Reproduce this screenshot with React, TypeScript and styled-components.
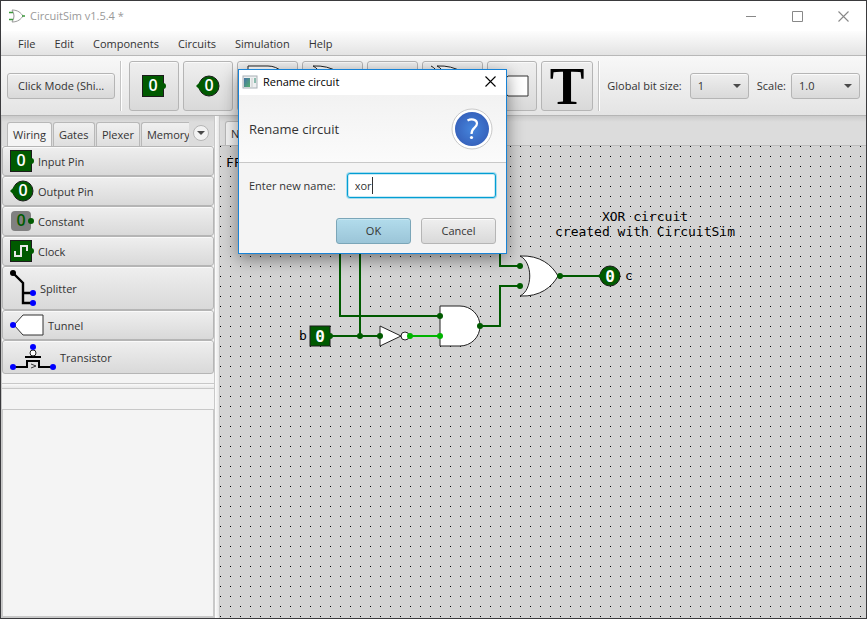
import React from 'react';
import styled, { createGlobalStyle, css } from 'styled-components';

const GREEN = '#005a00';
const LIVE = '#00b400';
const BLUE = '#0000ff';

const Global = createGlobalStyle`
  * { box-sizing: border-box; }
  body {
    margin: 0;
    font-family: "Open Sans", "Noto Sans", sans-serif;
    font-size: 11px;
    line-height: 16px;
    color: #333;
  }
  button, input, select { font: inherit; color: inherit; }
  svg { display: block; flex: none; }
`;

const raised = css`
  border: 1px solid #b5b5b5;
  border-radius: 3px;
  background: linear-gradient(#efefef, #d9d9d9);
  box-shadow: inset 0 1px 0 #fafafa;
`;

const Window = styled.div`
  position: relative;
  display: flex;
  flex-direction: column;
  height: 100vh;
  border: 1px solid #3a3a3d;
  background: #f4f4f4;
  overflow: hidden;
`;

const TitleBar = styled.header`
  display: flex;
  align-items: center;
  height: 30px;
  padding-left: 8px;
  gap: 5px;
  background: #fff;
  color: #999;
`;

const WindowButtons = styled.div`
  display: flex;
  margin-left: auto;
`;

const WindowButton = styled.button`
  display: flex;
  align-items: center;
  justify-content: center;
  width: 46px;
  height: 28px;
  border: 0;
  padding: 0;
  background: none;
`;

const MenuBar = styled.nav`
  display: flex;
  gap: 1px;
  height: 25px;
  padding-left: 8px;
  background: linear-gradient(#fdfdfd, #e3e3e3);
  border-bottom: 1px solid #b8b8b8;
`;

const MenuButton = styled.button`
  border: 0;
  padding: 2px 9px 0;
  background: none;
`;

const Toolbar = styled.div`
  display: flex;
  align-items: center;
  height: 60px;
  padding: 0 6px;
  gap: 4px;
  background: linear-gradient(#f8f8f8, #e4e4e4);
  border-bottom: 1px solid #b5b5b5;
`;

const ModeButton = styled.button`
  ${raised}
  width: 109px;
  height: 26px;
  padding: 0;
  white-space: nowrap;
`;

const ToolButton = styled.button<{ $w: number }>`
  ${raised}
  display: flex;
  align-items: center;
  justify-content: center;
  flex: none;
  width: ${p => p.$w}px;
  height: 50px;
  padding: 0;
`;

const Separator = styled.div`
  flex: none;
  width: 2px;
  height: 50px;
  margin: 0 3px 0 1px;
  background: linear-gradient(90deg, #c4c4c4 50%, #fff 50%);
`;

const Field = styled.label`
  display: flex;
  align-items: center;
  gap: 5px;
  margin-left: 4px;
  white-space: nowrap;
  &:first-of-type {
    gap: 8px;
    margin-left: 0;
  }
`;

const SelectBox = styled.span<{ $w: number }>`
  display: grid;
  align-items: center;
  width: ${p => p.$w}px;
  > * { grid-area: 1 / 1; }
  svg { justify-self: end; margin-right: 8px; pointer-events: none; }
`;

const Select = styled.select`
  ${raised}
  appearance: none;
  width: 100%;
  height: 26px;
  padding: 0 7px;
`;

const Workspace = styled.main`
  display: flex;
  flex: 1;
  min-height: 0;
`;

const Sidebar = styled.aside`
  display: flex;
  flex-direction: column;
  width: 214px;
  border: solid #c8c8c8;
  border-width: 0 1px 1px;
`;

const TabStrip = styled.div`
  display: flex;
  align-items: flex-end;
  flex: none;
  height: 30px;
  padding-left: 5px;
  gap: 1px;
  background: linear-gradient(#cbcbcb, #dcdcdc 6px);
  border-bottom: 1px solid #bdbdbd;
`;

const SideTabs = styled(TabStrip)`
  border-bottom: 0;
`;

const TabButton = styled.button<{ $active?: boolean; $cut?: boolean }>`
  min-width: 42px;
  height: 24px;
  padding: 0 5px;
  border: 1px solid #b8b8b8;
  border-bottom: 0;
  border-radius: 3px 3px 0 0;
  text-align: left;
  white-space: nowrap;
  background: ${p => (p.$active ? '#f4f4f4' : 'linear-gradient(#f0f0f0, #dedede)')};
  ${p => p.$cut && css`
    flex: 1;
    min-width: 0;
    overflow: hidden;
    border-right: 0;
    border-radius: 3px 0 0 0;
  `}
`;

const FileTab = styled(TabButton)`
  width: 80px;
`;

const MoreTabs = styled.button`
  display: flex;
  align-items: center;
  justify-content: center;
  flex: none;
  align-self: center;
  width: 16px;
  height: 16px;
  margin: 4px 5px 0 3px;
  padding: 0;
  border: 1px solid #b5b5b5;
  border-radius: 50%;
  background: #f2f2f2;
`;

const PartButton = styled.button<{ $h: number }>`
  ${raised}
  display: flex;
  align-items: center;
  flex: none;
  gap: 4px;
  height: ${p => p.$h}px;
  padding: 0 7px;
`;

const PartLabel = styled.span`
  padding-top: 2px;
`;

const Divider = styled.div`
  flex: none;
  height: 6px;
  margin-top: 9px;
  border: solid #c8c8c8;
  border-width: 1px 0;
  background: linear-gradient(#fafafa, #e8e8e8);
`;

const PropertiesHead = styled.div`
  flex: none;
  height: 21px;
  border-bottom: 1px solid #c8c8c8;
`;

const Properties = styled.section`
  flex: 1;
  border: solid #c8c8c8;
  border-width: 0 1px 1px;
`;

const Splitter = styled.div`
  flex: none;
  width: 5px;
  background: linear-gradient(90deg, #fdfdfd, #e6e6e6 80%, #c8c8c8 80%);
`;

const Editor = styled.section`
  display: flex;
  flex-direction: column;
  flex: 1;
  min-width: 0;
  background: #d3d3d3;
`;

const Canvas = styled.div`
  flex: 1;
  min-height: 0;
  background: conic-gradient(from 270deg at 1px 1px, #000 90deg, transparent 0) 0 0 / 10px 10px #d3d3d3;
`;

const Dialog = styled.div`
  position: absolute;
  left: 237px;
  top: 68px;
  width: 269px;
  border: 1px solid #1883d7;
  background: #f4f4f4;
  box-shadow: 0 5px 16px rgba(0, 0, 0, 0.45);
`;

const DialogTitle = styled.div`
  display: flex;
  align-items: center;
  height: 25px;
  padding: 0 0 2px 3px;
  gap: 5px;
  background: #fff;
  color: #000;
`;

const CloseButton = styled.button`
  display: flex;
  align-items: center;
  justify-content: center;
  width: 31px;
  height: 22px;
  margin-left: auto;
  padding: 0;
  border: 0;
  background: none;
`;

const DialogHead = styled.div`
  display: flex;
  align-items: center;
  justify-content: space-between;
  height: 68px;
  padding: 0 13px 0 10px;
  border-bottom: 1px solid #c8c8c8;
  background: linear-gradient(#f2f2f2, #fbfbfb);
  font-size: 13px;
`;

const NameRow = styled.label`
  display: flex;
  align-items: center;
  gap: 11px;
  padding: 10px 10px 0;
  white-space: nowrap;
`;

const InputBox = styled.span`
  position: relative;
  flex: 1;
`;

const NameInput = styled.input`
  display: block;
  width: 100%;
  height: 25px;
  padding: 0 7px;
  border: 1px solid #039ed3;
  border-radius: 3px;
  outline: 0;
  background: #fff;
  caret-color: transparent;
  box-shadow: inset 0 0 0 1px #c9e9f4, 0 0 0 1px #a6dcee;
`;

const Caret = styled.span`
  position: absolute;
  left: 25px;
  top: 4px;
  width: 1px;
  height: 17px;
  background: #333;
`;

const DialogActions = styled.div`
  display: flex;
  justify-content: flex-end;
  gap: 10px;
  padding: 20px 10px 9px;
`;

const ActionButton = styled.button<{ $primary?: boolean }>`
  ${raised}
  width: 75px;
  height: 26px;
  padding: 0;
  ${p => p.$primary && css`
    border-color: #7ba6b8;
    background: linear-gradient(#b2dcec, #9bc5d8);
    box-shadow: inset 0 1px 0 #c6e6f2;
  `}
`;

const SchematicText = styled.text`
  font-family: "DejaVu Sans Mono", monospace;
  font-size: 13px;
  fill: #000;
`;

const PinDigit = styled.text<{ $mono?: boolean }>`
  font-family: ${p => (p.$mono ? '"DejaVu Sans Mono", monospace' : '"Open Sans", sans-serif')};
  font-size: 16px;
  font-weight: ${p => (p.$mono ? 700 : 600)};
  text-anchor: middle;
`;

const BigLetter = styled.text`
  font-family: "Liberation Serif", serif;
  font-size: 52px;
  font-weight: 700;
  text-anchor: middle;
`;

const InputPinIcon = () => (
  <svg width="24" height="22">
    <rect x=".5" y=".5" width="21" height="21" fill={GREEN} stroke="#1c1c1c" />
    <circle cx="21" cy="11" r="3" fill={GREEN} />
    <PinDigit x="11" y="16" fill="#fff">0</PinDigit>
  </svg>
);

const OutputPinIcon = () => (
  <svg width="24" height="22">
    <circle cx="13" cy="11" r="10" fill={GREEN} stroke="#1c1c1c" />
    <path d="M0 11L5 6V16Z" fill={GREEN} />
    <PinDigit x="13" y="16" fill="#fff">0</PinDigit>
  </svg>
);

const ConstantIcon = () => (
  <svg width="24" height="22">
    <rect x="1" y="1" width="20" height="20" rx="4" fill="#808080" />
    <circle cx="21" cy="11" r="3" fill={GREEN} />
    <PinDigit x="11" y="16" fill={GREEN}>0</PinDigit>
  </svg>
);

const ClockIcon = () => (
  <svg width="24" height="22">
    <rect x=".5" y=".5" width="21" height="21" fill={GREEN} stroke="#1c1c1c" />
    <circle cx="21" cy="11" r="3" fill={GREEN} />
    <path d="M5 11V16H11V6H17V11" fill="none" stroke="#e8e8e8" strokeWidth="2" />
  </svg>
);

const SplitterIcon = () => (
  <svg width="26" height="36">
    <path d="M3 3L13 13V33H23M13 23H23" fill="none" stroke="#000" strokeWidth="2.4" />
    <circle cx="3" cy="3" r="3" />
    <circle cx="23" cy="23" r="3" fill={BLUE} />
    <circle cx="23" cy="33" r="3" fill={BLUE} />
  </svg>
);

const TunnelIcon = () => (
  <svg width="34" height="22">
    <path d="M4 11L13 1H33V21H13Z" fill="#fff" stroke="#333" />
    <circle cx="3" cy="11" r="3" fill={BLUE} />
  </svg>
);

const TransistorIcon = () => (
  <svg width="46" height="26">
    <path d="M3 23H17V17H29V23H43M15 13H31" fill="none" stroke="#000" strokeWidth="2" />
    <path d="M21 20L26 22L21 24" fill="none" stroke="#333" />
    <circle cx="23" cy="9" r="3" fill="#fff" stroke="#222" />
    <circle cx="23" cy="3" r="3" fill={BLUE} />
    <circle cx="3" cy="23" r="3" fill={BLUE} />
    <circle cx="43" cy="23" r="3" fill={BLUE} />
  </svg>
);

const AND_PATH = 'M0 0H20A20 20 0 0 1 20 40H0Z';
const OR_PATH = 'M0 0C20 -1 32 9 38 20C32 31 20 41 0 40C13 34 13 6 0 0Z';

const AndTool = () => (
  <svg width="42" height="42">
    <path d={AND_PATH} transform="translate(1 1)" fill="#fff" stroke="#222" />
  </svg>
);

const OrTool = () => (
  <svg width="42" height="42">
    <path d={OR_PATH} transform="translate(1 1)" fill="#fff" stroke="#222" />
  </svg>
);

const XorTool = () => (
  <svg width="46" height="42">
    <path d={OR_PATH} transform="translate(7 1)" fill="#fff" stroke="#222" />
    <path d="M1 1C14 7 14 35 1 41" fill="none" stroke="#222" />
  </svg>
);

const NotTool = () => (
  <svg width="32" height="22">
    <path d="M1 1L22 11L1 21Z" fill="#fff" stroke="#222" />
    <circle cx="26" cy="11" r="4" fill="#fff" stroke="#222" />
  </svg>
);

const TextTool = () => (
  <svg width="46" height="48">
    <BigLetter x="23" y="42">T</BigLetter>
  </svg>
);

const ArrowIcon = () => (
  <svg width="8" height="4"><path d="M0 0H8L4 4Z" fill="#4a4a4a" /></svg>
);

const AppIcon = () => (
  <svg width="16" height="14" fill="none">
    <path d="M3 1C9 1 12 4 14 7C12 10 9 13 3 13Q7 7 3 1Z" stroke="#999" />
    <path d="M0 3.5H4M0 10.5H4M13 7H16" stroke="#3d9a3d" strokeWidth="1.5" />
  </svg>
);

const DialogIcon = () => (
  <svg width="16" height="14">
    <defs>
      <linearGradient id="pane" x1="0" y1="0" x2="1" y2="1">
        <stop offset="0" stopColor="#4671a8" />
        <stop offset="1" stopColor="#54b06c" />
      </linearGradient>
    </defs>
    <rect x="1" y="1" width="14" height="12" fill="#eef0f1" stroke="#a8b0b5" />
    <rect x="2" y="3" width="6" height="9" fill="url(#pane)" />
    <rect x="9" y="3" width="2" height="9" fill="#dcdedf" />
    <rect x="12" y="3" width="2" height="5" fill="#8cbcae" />
  </svg>
);

const CrossIcon = ({ color }: { color: string }) => (
  <svg width="11" height="11">
    <path d="M.5 .5L10.5 10.5M10.5 .5L.5 10.5" stroke={color} strokeWidth="1.1" />
  </svg>
);

const QuestionIcon = () => (
  <svg width="42" height="42" fill="none">
    <defs>
      <radialGradient id="ball">
        <stop offset="0" stopColor="#4585dc" />
        <stop offset="1" stopColor="#3763bd" />
      </radialGradient>
    </defs>
    <circle cx="21" cy="21" r="20" fill="#fff" stroke="#c9c9c9" />
    <circle cx="21" cy="21" r="17" fill="url(#ball)" />
    <path d="M16.5 12.5C20 10.5 26 11 26 15.5C26 20 20.5 19.5 20.5 26" stroke="#fff" strokeWidth="2.2" />
    <circle cx="20.5" cy="29.5" r="1.6" fill="#fff" />
  </svg>
);

const nodes: [number, number, string][] = [
  [110, 190, GREEN], [140, 190, GREEN], [160, 190, GREEN], [190, 190, LIVE], [220, 190, LIVE],
  [220, 170, GREEN], [260, 180, GREEN], [300, 120, GREEN], [300, 140, GREEN], [340, 130, GREEN],
];

const Circuit = () => (
  <svg width="100%" height="100%">
    <g fill="none" strokeWidth="2" stroke={GREEN}>
      <path d="M120 0V170H220M140 0V190M110 190H160" />
      <path d="M260 180H280V140H300M280 0V120H300M340 130H380" />
      <path d="M190 190H220" stroke={LIVE} />
    </g>
    <g fill="#fff" stroke="#222">
      <path d="M160 180L181 190L160 200Z" />
      <circle cx="185" cy="190" r="4" />
      <path d={AND_PATH} transform="translate(220 160)" />
      <path d={OR_PATH} transform="translate(300 110)" />
    </g>
    <rect x="90" y="180" width="20" height="20" fill={GREEN} stroke="#1c1c1c" />
    <circle cx="390" cy="130" r="10" fill={GREEN} stroke="#1c1c1c" />
    <path d="M377 130L383 126V134Z" fill={GREEN} />
    {nodes.map(([x, y, color]) => <circle key={`${x}-${y}`} cx={x} cy={y} r="3" fill={color} />)}
    <PinDigit $mono x="100" y="196" fill="#fff">0</PinDigit>
    <PinDigit $mono x="390" y="136" fill="#fff">0</PinDigit>
    <SchematicText x="79" y="194">b</SchematicText>
    <SchematicText x="405" y="134">c</SchematicText>
    <SchematicText x="6" y="21">FF</SchematicText>
    <SchematicText x="425" y="75" textAnchor="middle">XOR circuit</SchematicText>
    <SchematicText x="425" y="90" textAnchor="middle">created with CircuitSim</SchematicText>
  </svg>
);

const menus = ['File', 'Edit', 'Components', 'Circuits', 'Simulation', 'Help'];

const tools = [
  { name: 'Input Pin', width: 50, Icon: InputPinIcon },
  { name: 'Output Pin', width: 50, Icon: OutputPinIcon },
  { name: 'AND', width: 61, Icon: AndTool },
  { name: 'OR', width: 61, Icon: OrTool },
  { name: 'NOT', width: 51, Icon: NotTool },
  { name: 'XOR', width: 61, Icon: XorTool },
  { name: 'Tunnel', width: 50, Icon: TunnelIcon },
  { name: 'Text', width: 52, Icon: TextTool },
];

const parts = [
  { name: 'Input Pin', height: 30, Icon: InputPinIcon },
  { name: 'Output Pin', height: 30, Icon: OutputPinIcon },
  { name: 'Constant', height: 30, Icon: ConstantIcon },
  { name: 'Clock', height: 30, Icon: ClockIcon },
  { name: 'Splitter', height: 44, Icon: SplitterIcon },
  { name: 'Tunnel', height: 30, Icon: TunnelIcon },
  { name: 'Transistor', height: 34, Icon: TransistorIcon },
];

export default function App() {
  return (
    <Window>
      <Global />
      <TitleBar>
        <AppIcon />
        <span>CircuitSim v1.5.4 *</span>
        <WindowButtons>
          <WindowButton aria-label="Minimize">
            <svg width="11" height="11"><path d="M0 5.5H10" stroke="#888" /></svg>
          </WindowButton>
          <WindowButton aria-label="Maximize">
            <svg width="11" height="11"><path d="M.5 .5H10.5V10.5H.5Z" fill="none" stroke="#888" /></svg>
          </WindowButton>
          <WindowButton aria-label="Close"><CrossIcon color="#888" /></WindowButton>
        </WindowButtons>
      </TitleBar>
      <MenuBar>{menus.map(m => <MenuButton key={m}>{m}</MenuButton>)}</MenuBar>
      <Toolbar>
        <ModeButton>Click Mode (Shi...</ModeButton>
        <Separator />
        {tools.map(({ name, width, Icon }) => (
          <ToolButton key={name} $w={width} aria-label={name}><Icon /></ToolButton>
        ))}
        <Separator />
        <Field>
          Global bit size:
          <SelectBox $w={59}>
            <Select defaultValue="1"><option>1</option></Select>
            <ArrowIcon />
          </SelectBox>
        </Field>
        <Field>
          Scale:
          <SelectBox $w={69}>
            <Select defaultValue="1.0"><option>1.0</option></Select>
            <ArrowIcon />
          </SelectBox>
        </Field>
      </Toolbar>
      <Workspace>
        <Sidebar>
          <SideTabs>
            <TabButton $active>Wiring</TabButton>
            <TabButton>Gates</TabButton>
            <TabButton>Plexer</TabButton>
            <TabButton $cut>Memory</TabButton>
            <MoreTabs aria-label="More tabs"><ArrowIcon /></MoreTabs>
          </SideTabs>
          {parts.map(({ name, height, Icon }) => (
            <PartButton key={name} $h={height}><Icon /><PartLabel>{name}</PartLabel></PartButton>
          ))}
          <Divider />
          <PropertiesHead />
          <Properties />
        </Sidebar>
        <Splitter />
        <Editor>
          <TabStrip><FileTab $active>N</FileTab></TabStrip>
          <Canvas><Circuit /></Canvas>
        </Editor>
      </Workspace>
      <Dialog role="dialog" aria-label="Rename circuit">
        <DialogTitle>
          <DialogIcon />
          Rename circuit
          <CloseButton aria-label="Close dialog"><CrossIcon color="#000" /></CloseButton>
        </DialogTitle>
        <DialogHead>Rename circuit<QuestionIcon /></DialogHead>
        <NameRow>
          Enter new name:
          <InputBox>
            <NameInput type="text" defaultValue="xor" />
            <Caret />
          </InputBox>
        </NameRow>
        <DialogActions>
          <ActionButton $primary>OK</ActionButton>
          <ActionButton>Cancel</ActionButton>
        </DialogActions>
      </Dialog>
    </Window>
  );
}
